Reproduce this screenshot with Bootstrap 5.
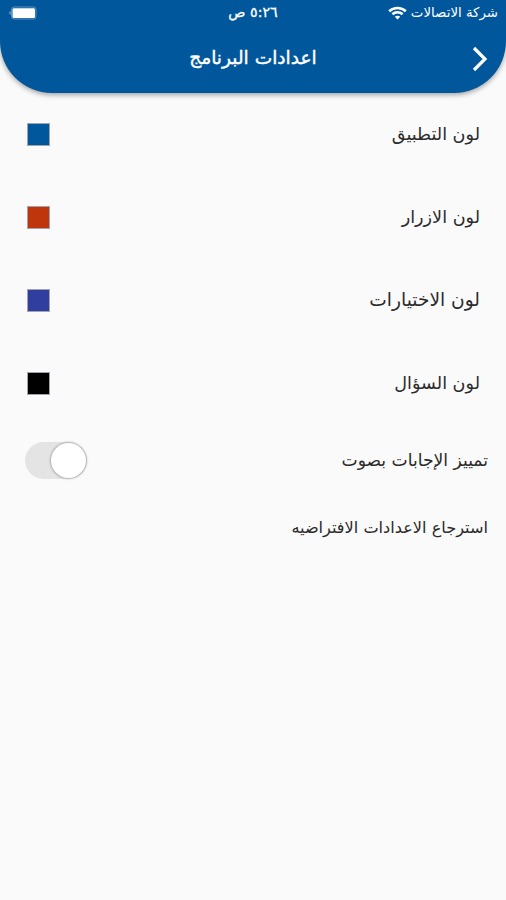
<!DOCTYPE html>
<html lang="ar" dir="rtl">
<head>
<meta charset="utf-8">
<meta name="viewport" content="width=device-width, initial-scale=1">
<title>اعدادات البرنامج</title>
<link href="https://cdn.jsdelivr.net/npm/bootstrap@5.3.0/dist/css/bootstrap.min.css" rel="stylesheet">
<style>
body{background:#fafafa;color:#2b2b2b;font-family:"DejaVu Sans",sans-serif;line-height:1.2}
.screen{height:900px}
.app-header{height:93px;background:#01579b;border-radius:0 0 52px 52px;box-shadow:0 2px 5px rgba(0,0,0,.35)}
.status-bar{height:26px;padding:0 8px;display:grid;grid-template-columns:1fr auto 1fr}
.carrier{font-size:13.35px}
.clock{font-size:14.2px;-webkit-text-stroke:.3px #fff}
.title-bar{height:64px;padding:0 16px;display:grid;grid-template-columns:20px 1fr 20px}
.page-title{font-size:18.6px;-webkit-text-stroke:.4px #fff}
.option{height:83px;padding:0 26px 0 27px;font-size:17.6px}
.option-wide{font-size:18.6px}
.swatch{width:23px;height:23px;border:1px solid #a3a3b0}
.swatch-app{background:#01579b}
.swatch-buttons{background:#bf360c}
.swatch-choices{background:#303f9f}
.swatch-question{background:#000}
.sound-row{height:70px;padding:0 18px 0 25px;font-size:17.15px}
.sound-toggle{width:62px;height:37px;background:#e4e4e4}
.sound-knob{width:35px;height:35px;margin:1px;background:#fff;box-shadow:0 0 2px 1px rgba(0,0,0,.25)}
.restore-row{height:66px;padding:0 18px;font-size:16.15px}
</style>
</head>
<body>
<div class="screen overflow-hidden">
  <header class="app-header text-white">
    <div class="status-bar align-items-center">
      <div class="d-flex align-items-center gap-1"><span class="carrier">شركة الاتصالات</span>
        <svg width="19" height="14" viewBox="0 0 19 14" fill="none" stroke="#fff" stroke-width="2.6"><path d="M1.2 5.2C5.8.9 13.2.9 17.8 5.2M4.4 8.3c2.9-2.7 7.3-2.7 10.2 0"/><path d="M9.5 13.4 6.8 10.7c1.5-1.4 3.9-1.4 5.4 0z" fill="#fff" stroke="none"/></svg>
      </div>
      <span class="clock">٥:٢٦ ص</span>
      <svg class="me-auto" width="29" height="14" viewBox="0 0 29 14"><rect x="3.5" y="1" width="24.5" height="12" rx="2.5" fill="none" stroke="#5f92c0"/><rect x="4.5" y="2.2" width="22.5" height="9.8" rx="1.3" fill="#fff"/><path d="M2.5 5Q0 7 2.5 9z" fill="#8fb4d3"/></svg>
    </div>
    <div class="title-bar align-items-center">
      <svg width="20" height="28" viewBox="0 0 20 28" fill="none" stroke="#fff" stroke-width="3.2"><path d="m4 4 11 11L4 26"/></svg>
      <h1 class="page-title text-center m-0">اعدادات البرنامج</h1>
    </div>
  </header>
  <main>
    <div class="option d-flex align-items-center justify-content-between"><span>لون التطبيق</span><span class="swatch swatch-app"></span></div>
    <div class="option d-flex align-items-center justify-content-between"><span>لون الازرار</span><span class="swatch swatch-buttons"></span></div>
    <div class="option option-wide d-flex align-items-center justify-content-between"><span>لون الاختيارات</span><span class="swatch swatch-choices"></span></div>
    <div class="option d-flex align-items-center justify-content-between"><span>لون السؤال</span><span class="swatch swatch-question"></span></div>
    <div class="sound-row d-flex align-items-center justify-content-between"><span>تمييز الإجابات بصوت</span><span class="sound-toggle rounded-pill d-flex"><span class="sound-knob rounded-circle"></span></span></div>
    <div class="restore-row d-flex align-items-center"><span>استرجاع الاعدادات الافتراضيه</span></div>
  </main>
</div>
<script src="https://cdn.jsdelivr.net/npm/bootstrap@5.3.0/dist/js/bootstrap.bundle.min.js"></script>
</body>
</html>
